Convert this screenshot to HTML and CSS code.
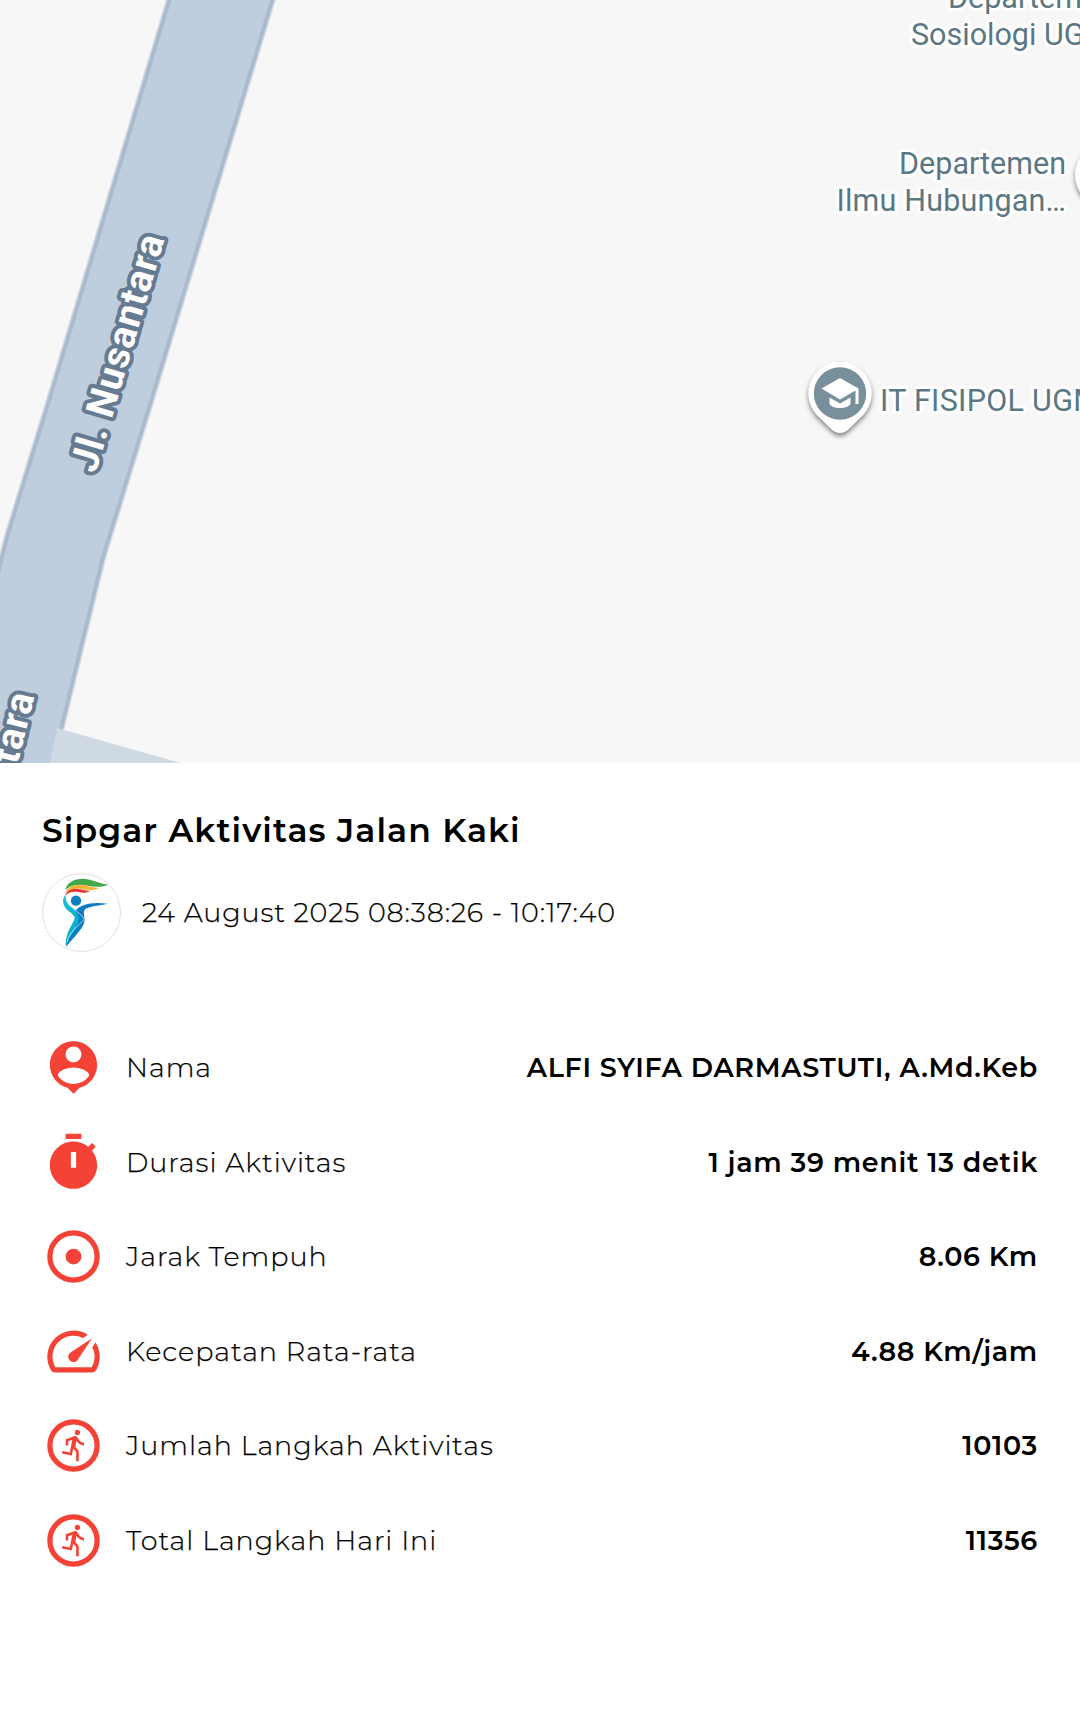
FILE: index.html
```
<!DOCTYPE html>
<html lang="id">
<head>
    <meta charset="utf-8"/>
    <title>Sipgar Aktivitas Jalan Kaki</title>
    <link rel="stylesheet" href="styles.css">
</head>
<body>
    <!-- Peta -->
    <div class="map">
        <svg class="map-canvas" width="1080" height="763" viewBox="0 0 1080 763">
            <defs>
                <filter id="pin-shadow" x="-30%" y="-30%" width="160%" height="160%">
                    <feDropShadow dx="0" dy="3" stdDeviation="2.5" flood-color="#000" flood-opacity="0.5"/>
                </filter>
            </defs>

            <path class="road-edge" d="M170.500 -4 L49 401 L12 521 Q5 543 -4 582 L-4 770 L51 770 L103 557 L151 401 L273.500 -4 Z"/>
            <path class="road" d="M170.500 -4 L49 401 L12 521 Q5 543 -4 582 L-4 770 L51 770 L103 557 L151 401 L273.500 -4 Z"/>
            <path class="path-side" d="M57 728 L181 763 L50 763 Z"/>

            <text class="road-label" x="0" y="0" textLength="245" transform="translate(95.5 474) rotate(-73.6)">Jl. Nusantara</text>
            <text class="road-label" x="0" y="0" text-anchor="end" textLength="245" transform="translate(34.5 696) rotate(-76)">Jl. Nusantara</text>

            <text class="place" x="948" y="8">Departemen</text>
            <text class="place" x="911" y="45">Sosiologi UGM</text>
            <text class="place" x="1066" y="173.500" text-anchor="end">Departemen</text>
            <text class="place" x="836.500" y="210.500" textLength="229.500">Ilmu Hubungan…</text>
            <text class="place place-wide" x="880" y="411">IT FISIPOL UGM</text>

            <path class="pin" filter="url(#pin-shadow)" d="M1107 143 a32 32 0 0 1 22 55 l-16 16 q-6 4 -12 0 l-16 -16 a32 32 0 0 1 22 -55 Z"/>
            <path class="pin" filter="url(#pin-shadow)" d="M840 362 a31.5 31.5 0 0 1 23 53 l-15.500 15 q-7.500 6 -15 0 l-15.500 -15 a31.500 31.500 0 0 1 23 -53 Z"/>
            <circle class="pin-dot" cx="840" cy="393.500" r="26.200"/>
            <path class="pin-glyph" d="M840 378 l18.500 10.500 v15.500 h-3 v-13.500 L840 399.500 l-18.500 -11 Z M829.500 397.500 l10.500 6 10.500 -6 v6.500 q-2.500 4 -10.500 4 t-10.500 -4 Z"/>
        </svg>
    </div>

    <!-- Detail aktivitas -->
    <div class="detail">
        <h1 class="title">Sipgar Aktivitas Jalan Kaki</h1>

        <div class="activity-time">
            <svg class="logo" viewBox="0 0 237 237">
                <defs>
                    <linearGradient id="body" x1="0" y1="0" x2="1" y2="1">
                        <stop offset="0" stop-color="#19c3d6"/>
                        <stop offset="0.5" stop-color="#0bb0cf"/>
                        <stop offset="1" stop-color="#00bcd4"/>
                    </linearGradient>
                </defs>
                <circle class="logo-ring" cx="118.500" cy="118.500" r="117"/>
                <path fill="#43a84a" d="M70 51 C75 25 104 15 130 18 C158 22 176 33 199 35 C178 43 158 43 137 38 C110 32 84 37 70 51 Z"/>
                <path fill="#f5b32f" d="M70 59 C79 37 104 33 126 37 C143 41 157 45 173 44 C158 52 140 53 121 48 C101 44 82 48 70 59 Z"/>
                <path fill="#e53935" d="M70 69 C72 50 92 45 109 48 C124 50 133 54 145 54 C133 61 122 60 108 57 C91 55 78 58 70 69 Z"/>
                <circle fill="#0a7fc2" cx="102" cy="83" r="15.500"/>
                <path fill="url(#body)" d="M70 66 C58 80 63 98 75 110 C89 122 98 126 98 135 C97 150 70 174 71 218 C87 190 122 169 126 140 C127 120 86 108 76 90 C70 81 71 74 70 66 Z"/>
                <path fill="#0a7cc0" d="M99 114 C117 94 146 86 197 92 C172 98 145 99 130 108 C122 116 127 127 128 138 C129 163 97 190 72 222 C73 195 108 171 110 139 C111 127 105 121 99 114 Z"/>
                <path class="logo-line" d="M95 110 C108 117 122 127 126 140 C113 154 79 180 76 207"/>
            </svg>
            <span class="time-text">24 August 2025 08:38:26 - 10:17:40</span>
        </div>

        <ul class="stats">
            <li>
                <svg class="icon" viewBox="0 0 24 24"><path d="M12 2c-4.970 0-9 4.030-9 9 0 4.170 2.840 7.670 6.690 8.690L12 22l2.310-2.310C18.160 18.670 21 15.170 21 11c0-4.970-4.030-9-9-9zm0 2c1.660 0 3 1.340 3 3s-1.340 3-3 3-3-1.340-3-3 1.340-3 3-3zm0 14.300c-2.500 0-4.710-1.280-6-3.220.030-1.990 4-3.080 6-3.080 1.990 0 5.970 1.090 6 3.080-1.290 1.940-3.500 3.220-6 3.220z"/></svg>
                <span class="label">Nama</span>
                <span class="value">ALFI SYIFA DARMASTUTI, A.Md.Keb</span>
            </li>
            <li>
                <svg class="icon" viewBox="0 0 24 24"><path fill-rule="evenodd" d="M15 1H9v2h6V1zm-4 13h2V8h-2v6zm8.030-6.610l1.420-1.420c-.430-.510-.900-.990-1.410-1.410l-1.420 1.420C16.070 4.740 14.120 4 12 4c-4.970 0-9 4.030-9 9s4.020 9 9 9 9-4.030 9-9c0-2.120-.740-4.070-1.970-5.610z"/></svg>
                <span class="label">Durasi Aktivitas</span>
                <span class="value">1 jam 39 menit 13 detik</span>
            </li>
            <li>
                <svg class="icon" viewBox="0 0 24 24"><circle class="ring" cx="12" cy="12" r="9"/><circle cx="12" cy="12" r="3"/></svg>
                <span class="label">Jarak Tempuh</span>
                <span class="value">8.06 Km</span>
            </li>
            <li>
                <svg class="icon" viewBox="0 0 24 24"><path d="M20.380 8.570l-1.230 1.850a8 8 0 0 1-.220 7.580H5.070A8 8 0 0 1 15.580 6.850l1.850-1.230A10 10 0 0 0 3.350 19a2 2 0 0 0 1.720 1h13.850a2 2 0 0 0 1.740-1 10 10 0 0 0-.270-10.440zm-9.790 6.840a2 2 0 0 0 2.830 0l5.660-8.490-8.490 5.660a2 2 0 0 0 0 2.830z"/></svg>
                <span class="label">Kecepatan Rata-rata</span>
                <span class="value">4.88 Km/jam</span>
            </li>
            <li>
                <svg class="icon" viewBox="0 0 24 24"><circle class="ring" cx="12" cy="12" r="9"/><circle cx="13.500" cy="7" r="1"/><path d="M16 12c-.7 0-2.010-.540-2.910-1.760l-.410 2.350L14 14.030V18h-1v-3.580l-1.110-1.210-.520 2.640L7.600 15.080l.2-.980 2.780.570.960-4.890L10 10.350V12H9V9.650l3.280-1.210c.490-.180 1.030.060 1.260.530C14.370 10.670 15.590 11 16 11v1z"/></svg>
                <span class="label">Jumlah Langkah Aktivitas</span>
                <span class="value">10103</span>
            </li>
            <li>
                <svg class="icon" viewBox="0 0 24 24"><circle class="ring" cx="12" cy="12" r="9"/><circle cx="13.500" cy="7" r="1"/><path d="M16 12c-.7 0-2.010-.540-2.910-1.760l-.410 2.350L14 14.030V18h-1v-3.580l-1.110-1.210-.520 2.640L7.600 15.080l.2-.980 2.780.570.960-4.890L10 10.350V12H9V9.650l3.280-1.210c.490-.180 1.030.060 1.260.530C14.370 10.670 15.590 11 16 11v1z"/></svg>
                <span class="label">Total Langkah Hari Ini</span>
                <span class="value">11356</span>
            </li>
        </ul>
    </div>
</body>
</html>
```
FILE: styles.css
```
body {
    margin: 0;
    background-color: #fff;
    color: #000;
    font-family: Montserrat, Inter, sans-serif;
}

/* Peta */
.map {
    height: 763px;
    overflow: hidden;
    background-color: #f7f7f7;
}
.map-canvas {
    display: block;
}
.road {
    fill: #bfcedf;
    stroke: #abbacd;
    stroke-width: 4;
}
.road-edge {
    fill: none;
    stroke: #abbacd;
    stroke-width: 7;
    opacity: 0.4;
}
.path-side {
    fill: #cfd9e3;
}
.road-label {
    font-family: Roboto, sans-serif;
    font-size: 39px;
    font-weight: 700;
    fill: #fff;
    stroke: #667a91;
    stroke-width: 8;
    stroke-linejoin: round;
    paint-order: stroke;
}
.place {
    font-family: Roboto, sans-serif;
    font-size: 30.5px;
    fill: #5b7783;
    stroke: #fff;
    stroke-width: 6;
    stroke-linejoin: round;
    paint-order: stroke;
}
.place-wide {
    letter-spacing: 0.3px;
}
.pin {
    fill: #fff;
}
.pin-dot {
    fill: #78909c;
}
.pin-glyph {
    fill: #fff;
}

/* Detail aktivitas */
.detail {
    padding: 46px 42px 0;
}
.title {
    margin: 0;
    font-size: 33px;
    font-weight: 600;
    line-height: 42px;
    letter-spacing: 1.1px;
}
.activity-time {
    display: flex;
    align-items: center;
    gap: 21px;
    margin-top: 22px;
}
.logo {
    width: 79px;
    height: 79px;
}
.logo-ring {
    fill: #fff;
    stroke: #cfcfcf;
    stroke-width: 2;
}
.logo-line {
    fill: none;
    stroke: #fff;
    stroke-width: 2;
}
.time-text {
    font-size: 27px;
    font-weight: 300;
    letter-spacing: 0.86px;
    -webkit-text-stroke: 0.25px #000;
}
.stats {
    display: flex;
    flex-direction: column;
    gap: 31.6px;
    list-style: none;
    margin: 84px 0 0;
    padding: 0;
}
.stats li {
    display: flex;
    align-items: center;
    height: 63px;
}
.icon {
    width: 63px;
    height: 63px;
    margin-right: 21px;
    fill: #f44336;
}
.ring {
    fill: none;
    stroke: #f44336;
    stroke-width: 2;
}
.label {
    flex: 1;
    font-size: 27px;
    font-weight: 300;
    letter-spacing: 0.96px;
    -webkit-text-stroke: 0.25px #000;
}
.value {
    font-size: 27px;
    font-weight: 600;
    letter-spacing: 0.69px;
}
```
